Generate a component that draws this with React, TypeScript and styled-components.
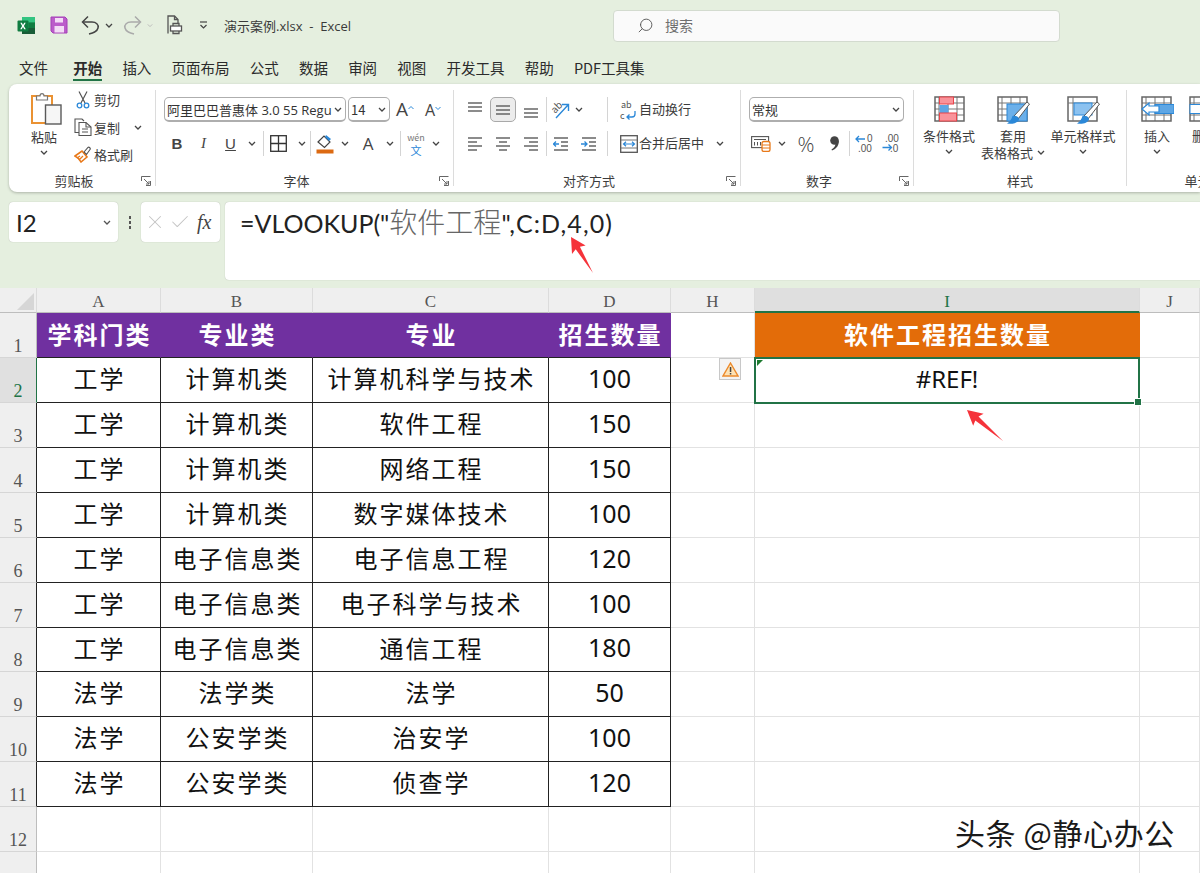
import React from 'react';
import styled, { createGlobalStyle } from 'styled-components';
import { Search, X, Check } from 'lucide-react';

const UI_FONT = '"Open Sans", "Noto Sans CJK SC", sans-serif';
const CELL_FONT = '"Noto Sans CJK SC", "Noto Sans", sans-serif';
const GREEN = '#217346';
const BLUE = '#2b88d8';

const GlobalStyle = createGlobalStyle`
  html, body { margin: 0; padding: 0; background: #e5efdf; }
  * { box-sizing: border-box; }
`;

const s = {
  Page: styled.div`
    position: relative;
    width: 1200px;
    height: 873px;
    overflow: hidden;
    background: #e5efdf;
    font-family: ${UI_FONT};
    color: #333;
    display: flex;
    flex-direction: column;
  `,
  TitleBar: styled.div`
    height: 50px;
    display: flex;
    align-items: center;
    flex: none;
  `,
  QuickAccess: styled.div`
    width: 613px;
    display: flex;
    align-items: center;
    padding-left: 14px;
    height: 100%;
  `,
  Slot: styled.div<{ $w: number; $ml?: number }>`
    width: ${(p) => p.$w}px;
    margin-left: ${(p) => p.$ml ?? 0}px;
    flex: none;
    display: flex;
    align-items: center;
    justify-content: center;
    height: 100%;
  `,
  DocTitle: styled.div`
    margin-left: 14px;
    font-size: 13px;
    color: #3a3a3a;
    white-space: pre;
  `,
  SearchBox: styled.div`
    width: 447px;
    height: 32px;
    margin-top: 2px;
    background: #fafafa;
    border: 1px solid #d3dbcf;
    border-radius: 4px;
    display: flex;
    align-items: center;
    gap: 11px;
    padding: 0 0 2px 23px;
    font-size: 14px;
    color: #6e6e6e;
  `,
  Tabs: styled.div`
    height: 34px;
    flex: none;
    display: flex;
    gap: 20.2px;
    padding-left: 19px;
  `,
  Tab: styled.div<{ $active?: boolean }>`
    height: 31px;
    margin-left: ${(p) => (p.$active ? 5 : 0)}px;
    line-height: 36px;
    font-size: 14.5px;
    font-family: ${CELL_FONT};
    font-weight: ${(p) => (p.$active ? 700 : 400)};
    color: #2b2b2b;
    white-space: nowrap;
    border-bottom: 2px solid ${(p) => (p.$active ? GREEN : 'transparent')};
  `,
  Ribbon: styled.div`
    height: 108px;
    flex: none;
    margin-left: 9px;
    background: #fff;
    border-radius: 8px 0 0 8px;
    box-shadow: 0 1px 3px rgba(0, 0, 0, 0.25);
    display: flex;
    overflow: hidden;
    font-family: ${CELL_FONT};
    font-size: 13px;
    color: #3c3c3c;
  `,
  Group: styled.section<{ $w: number }>`
    width: ${(p) => p.$w}px;
    flex: none;
    display: flex;
    flex-direction: column;
  `,
  GroupBody: styled.div<{ $pl?: number }>`
    height: 88px;
    display: flex;
    padding-left: ${(p) => p.$pl ?? 0}px;
  `,
  GroupFooter: styled.div`
    height: 17px;
    display: flex;
    align-items: center;
  `,
  GroupLabel: styled.div`
    flex: 1;
    text-align: center;
    font-size: 13px;
    line-height: 17px;
    white-space: nowrap;
  `,
  Launcher: styled.div`
    width: 16px;
    display: flex;
    justify-content: center;
    padding-right: 2px;
  `,
  GroupDivider: styled.div`
    width: 1px;
    height: 96px;
    margin-top: 6px;
    background: #dcdcdc;
    flex: none;
  `,
  PasteBtn: styled.div`
    width: 63px;
    flex: none;
    display: flex;
    flex-direction: column;
    align-items: center;
    padding: 8px 0 0 7px;
  `,
  PasteArt: styled.div`
    margin-left: 6px;
    height: 33px;
  `,
  BtnLabel: styled.div<{ $mt?: number }>`
    margin-top: ${(p) => p.$mt ?? 0}px;
    line-height: 17px;
    white-space: nowrap;
    display: flex;
    align-items: center;
    gap: 4px;
  `,
  CaretLine: styled.div`
    height: 15px;
    display: flex;
    align-items: center;
  `,
  SmallCol: styled.div`
    padding-top: 2px;
    display: flex;
    flex-direction: column;
  `,
  SmallRow: styled.div`
    height: 27.5px;
    display: flex;
    align-items: center;
    white-space: nowrap;
  `,
  Rows: styled.div`
    padding-top: 13px;
    display: flex;
    flex-direction: column;
    gap: 9px;
  `,
  Row: styled.div`
    height: 25px;
    display: flex;
    align-items: center;
    white-space: nowrap;
  `,
  RowText: styled.span`
    margin-bottom: 2px;
  `,
  Select: styled.div<{ $w: number; $ml?: number }>`
    width: ${(p) => p.$w}px;
    margin-left: ${(p) => p.$ml ?? 0}px;
    height: 25px;
    flex: none;
    border: 1px solid #aeaeae;
    border-bottom-width: 2px;
    border-radius: 5px;
    padding: 0 3px 0 2px;
    display: flex;
    align-items: center;
    gap: 5px;
    font-size: 13px;
    color: #333;
  `,
  SelectText: styled.span`
    white-space: nowrap;
    flex: 1;
    min-width: 0;
  `,
  SelectLatin: styled.span`
    font-family: 'Open Sans', sans-serif;
    font-size: 13px;
  `,
  GrowA: styled.span<{ $size: number }>`
    font-family: 'Open Sans', sans-serif;
    font-size: ${(p) => p.$size}px;
    color: #444;
    line-height: 1;
  `,
  FontBtn: styled.span<{ $bold?: boolean; $italic?: boolean; $under?: boolean }>`
    font-family: ${(p) => (p.$italic ? "'Liberation Serif', serif" : "'Liberation Sans', sans-serif")};
    font-size: 15px;
    font-weight: ${(p) => (p.$bold ? 700 : 400)};
    font-style: ${(p) => (p.$italic ? 'italic' : 'normal')};
    text-decoration: ${(p) => (p.$under ? 'underline' : 'none')};
    color: #444;
  `,
  VSep: styled.div<{ $ml?: number }>`
    width: 1px;
    height: 25px;
    flex: none;
    margin-left: ${(p) => p.$ml ?? 0}px;
    background: #d4d4d4;
  `,
  Wen: styled.div`
    display: flex;
    flex-direction: column;
    align-items: center;
    gap: 1px;
  `,
  WenTop: styled.span`
    font-size: 9px;
    line-height: 11px;
    color: #777;
  `,
  WenBottom: styled.span`
    font-size: 11px;
    line-height: 12px;
    color: ${BLUE};
  `,
  Pressed: styled.div`
    width: 26px;
    height: 25px;
    background: #ececec;
    border: 1px solid #a9a9a9;
    border-radius: 5px;
    display: flex;
    align-items: center;
    justify-content: center;
  `,
  Percent: styled.span`
    font-family: 'Open Sans', sans-serif;
    font-weight: 300;
    font-size: 21px;
    color: #444;
  `,
  BigBtn: styled.div<{ $w: number }>`
    width: ${(p) => p.$w}px;
    flex: none;
    display: flex;
    flex-direction: column;
    align-items: center;
    padding-top: 12px;
  `,
  BigArt: styled.div`
    height: 28px;
  `,
  FormulaRow: styled.div`
    height: 78px;
    margin-top: 10px;
    padding-left: 9px;
    flex: none;
    display: flex;
    align-items: flex-start;
  `,
  NameBox: styled.div`
    width: 109px;
    height: 40px;
    background: #fff;
    border-radius: 4px;
    box-shadow: 0 0 1px rgba(0, 0, 0, 0.3);
    display: flex;
    align-items: center;
    justify-content: space-between;
    padding: 0 7px;
    font-family: 'Lato', sans-serif;
    font-size: 24px;
    color: #222;
  `,
  Dots: styled.div`
    width: 23px;
    height: 40px;
    flex: none;
    display: flex;
    flex-direction: column;
    align-items: center;
    justify-content: center;
    gap: 2px;
  `,
  Dot: styled.i`
    width: 2px;
    height: 3px;
    background: #555;
  `,
  FxBox: styled.div`
    width: 79px;
    height: 40px;
    flex: none;
    background: #fff;
    border-radius: 4px;
    box-shadow: 0 0 1px rgba(0, 0, 0, 0.3);
    display: flex;
    align-items: center;
    gap: 3px;
    padding-left: 3px;
  `,
  Fx: styled.span`
    margin-left: 3px;
    font-family: 'Liberation Serif', serif;
    font-style: italic;
    font-size: 20px;
    color: #444;
  `,
  FormulaInput: styled.div`
    flex: 1;
    height: 78px;
    margin-left: 5px;
    background: #fff;
    border-radius: 4px 0 0 4px;
    box-shadow: 0 0 1px rgba(0, 0, 0, 0.3);
    padding-left: 15px;
    font-family: 'Lato', sans-serif;
    font-size: 25px;
    line-height: 38px;
    color: #222;
    white-space: nowrap;
  `,
  FormulaCjk: styled.span`
    font-family: 'Noto Sans CJK SC', sans-serif;
    font-size: 28px;
    font-weight: 300;
    color: #666;
  `,
  FormulaTail: styled.span`
    letter-spacing: 1.1px;
  `,
  Sheet: styled.div`
    margin-top: 8px;
    flex: 1;
    min-height: 0;
    background: #fff;
    display: grid;
    grid-template-columns: 37px 124px 152px 236px 122px 84px 385px 1fr;
    grid-template-rows: 25px 45px 45px 45px 45px 45px 45px 45px 44px 45px 45px 45px 45px 45px;
    overflow: hidden;
  `,
  Corner: styled.div`
    position: relative;
    background: #efefef;
    border-right: 1px solid #dcdcdc;
    border-bottom: 1px solid #bdbdbd;
    &::after {
      content: '';
      position: absolute;
      right: 2px;
      bottom: 2px;
      border-style: solid;
      border-width: 0 0 17px 17px;
      border-color: transparent transparent #d6d6d6 transparent;
    }
  `,
  ColHead: styled.div<{ $active?: boolean }>`
    background: ${(p) => (p.$active ? '#dfdfdf' : '#efefef')};
    border-right: 1px solid #dcdcdc;
    border-bottom: ${(p) => (p.$active ? `2px solid ${GREEN}` : '1px solid #bdbdbd')};
    color: ${(p) => (p.$active ? GREEN : '#555')};
    font-family: 'Liberation Serif', serif;
    font-size: 17px;
    text-align: center;
    line-height: 28px;
  `,
  RowHead: styled.div<{ $active?: boolean; $table?: boolean }>`
    background: ${(p) => (p.$active ? '#e0e0e0' : '#efefef')};
    border-bottom: 1px solid #d6d6d6;
    border-right: 1px solid ${(p) => (p.$active ? GREEN : p.$table ? '#222' : '#bdbdbd')};
    color: ${(p) => (p.$active ? GREEN : '#555')};
    font-family: 'Liberation Serif', serif;
    font-size: 18px;
    display: flex;
    align-items: flex-end;
    justify-content: center;
  `,
  Cell: styled.div<{ $bg?: string; $line?: string; $bottom?: string; $white?: boolean; $num?: boolean }>`
    position: relative;
    background: ${(p) => p.$bg ?? '#fff'};
    border-right: 1px solid ${(p) => p.$line ?? '#e2e2e2'};
    border-bottom: 1px solid ${(p) => p.$bottom ?? p.$line ?? '#e2e2e2'};
    color: ${(p) => (p.$white ? '#fff' : '#111')};
    font-family: ${(p) => (p.$num ? "'Noto Sans', sans-serif" : CELL_FONT)};
    font-size: ${(p) => (p.$num ? 25 : 24)}px;
    font-weight: ${(p) => (p.$white ? 700 : 400)};
    letter-spacing: ${(p) => (p.$num ? 0 : 2)}px;
    padding-bottom: ${(p) => (p.$white ? 3 : 5)}px;
    padding-left: ${(p) => (p.$num ? 0 : 2)}px;
    white-space: nowrap;
    display: flex;
    align-items: center;
    justify-content: center;
  `,
  ActiveCell: styled.div`
    position: relative;
    z-index: 2;
    margin: -1px 0 -1px -1px;
    padding-bottom: 4px;
    background: #fff;
    border: 2px solid ${GREEN};
    color: #111;
    font-family: 'Noto Sans', sans-serif;
    font-size: 24px;
    display: flex;
    align-items: center;
    justify-content: center;
    &::before {
      content: '';
      position: absolute;
      left: 1px;
      top: 1px;
      border-style: solid;
      border-width: 6px 6px 0 0;
      border-color: #1c7a2f transparent transparent transparent;
    }
    &::after {
      content: '';
      position: absolute;
      right: -4px;
      bottom: -4px;
      width: 6px;
      height: 6px;
      background: ${GREEN};
      border: 1px solid #fff;
    }
  `,
  WarnBadge: styled.div`
    position: absolute;
    right: 13px;
    top: 0;
    width: 22px;
    height: 22px;
    background: #f4f4f4;
    border: 1px solid #c8c8c8;
    display: flex;
    align-items: center;
    justify-content: center;
  `,
  Arrow: styled.svg<{ $left: number; $top: number }>`
    position: absolute;
    left: ${(p) => p.$left}px;
    top: ${(p) => p.$top}px;
    z-index: 5;
  `,
  Watermark: styled.div`
    position: absolute;
    left: 955px;
    top: 812px;
    z-index: 5;
    font-family: ${CELL_FONT};
    font-size: 30px;
    letter-spacing: 0.6px;
    line-height: 40px;
    color: #1a1a1a;
    text-shadow: 1px 1px 1px #fff;
    white-space: nowrap;
  `,
};

const Caret = ({ color = '#444' }: { color?: string }) => (
  <svg width="8" height="5" viewBox="0 0 8 5">
    <polyline points="1,1 4,4 7,1" fill="none" stroke={color} strokeWidth="1.3" />
  </svg>
);

const LauncherIcon = () => (
  <svg width="10" height="10" viewBox="0 0 10 10" fill="none" stroke="#666" strokeWidth="1">
    <path d="M0.5 5V0.5H9.5" />
    <path d="M9.5 5V9.5H5" />
    <path d="M3 3L8 8M8 5V8H5" />
  </svg>
);

const ExcelLogo = () => (
  <svg width="19" height="19" viewBox="0 0 19 19">
    <rect x="5" y="1" width="13" height="17" rx="1.5" fill="#21a366" />
    <rect x="5" y="1" width="13" height="5.5" fill="#33c481" />
    <rect x="11.5" y="6.5" width="6.5" height="5.5" fill="#107c41" />
    <rect x="5" y="12" width="13" height="6" fill="#185c37" />
    <rect x="0.5" y="4.5" width="11" height="11" rx="1" fill="#107c41" />
    <path d="M3.3 6.8H4.9L6 8.9L7.2 6.8H8.7L6.9 10L8.8 13.2H7.2L6 11L4.8 13.2H3.2L5.1 10Z" fill="#fff" />
  </svg>
);

const SaveIcon = () => (
  <svg width="18" height="18" viewBox="0 0 18 18">
    <path d="M1 1H15L17 3V17H3L1 15Z" fill="#bb5cca" stroke="#a53fb8" />
    <rect x="5" y="2" width="8" height="4.5" fill="#f3dcf6" />
    <rect x="4.5" y="10" width="9.5" height="6.5" fill="#f3dcf6" />
  </svg>
);

const UndoIcon = ({ color, flip }: { color: string; flip?: boolean }) => (
  <svg width="19" height="20" viewBox="0 0 19 20" fill="none" stroke={color} strokeWidth="1.5" transform={flip ? 'scale(-1 1)' : undefined}>
    <path d="M2 7H11C15 7 18 9.5 17 13C16 17 12 18 8 19" />
    <path d="M7 1.5L1.5 7L7 12.5" />
  </svg>
);

const PreviewIcon = () => (
  <svg width="17" height="20" viewBox="0 0 17 20" fill="none" stroke="#555" strokeWidth="1.3">
    <path d="M2 18.5V1H8.5L12 4.5V8" />
    <path d="M8.5 1V4.5H12" />
    <rect x="4.5" y="11" width="11" height="5" fill="#fff" />
    <path d="M7 11V8.5H13V11M7 16V18.5H13V16" />
  </svg>
);

const CustomizeIcon = () => (
  <svg width="9" height="8" viewBox="0 0 9 8" fill="none" stroke="#444" strokeWidth="1.2">
    <path d="M1 1H8" />
    <path d="M1.5 4L4.5 7L7.5 4" />
  </svg>
);

const PasteIcon = () => (
  <svg width="32" height="33" viewBox="0 0 32 33">
    <rect x="1" y="4" width="20" height="27" fill="#fff" stroke="#ea9233" strokeWidth="2" />
    <path d="M5.5 8V4H9C9 0.7 13 0.7 13 4H16.5V8Z" fill="#fff" stroke="#777" strokeWidth="1.2" />
    <rect x="14.5" y="13" width="15.5" height="19" fill="#f6f6f6" stroke="#5a5a5a" strokeWidth="1.4" />
  </svg>
);

const ScissorsIcon = () => (
  <svg width="14" height="18" viewBox="0 0 14 18" fill="none">
    <path d="M3 0.5L9 12M11 0.5L5 12" stroke="#555" strokeWidth="1.2" />
    <circle cx="3.5" cy="14.5" r="2.3" stroke={BLUE} strokeWidth="1.3" />
    <circle cx="10.5" cy="14.5" r="2.3" stroke={BLUE} strokeWidth="1.3" />
  </svg>
);

const CopyIcon = () => (
  <svg width="18" height="18" viewBox="0 0 18 18" fill="none" stroke="#555" strokeWidth="1.1">
    <path d="M5 14.5H1V1H8L10 3" />
    <path d="M5 4.5H12L17 9V17.5H5Z" fill="#fff" />
    <path d="M12 4.5V9H17M8 11H14M8 14H14" />
  </svg>
);

const PainterIcon = () => (
  <svg width="18" height="17" viewBox="0 0 18 17">
    <path d="M1 10L8 5L13 11L7 16C6 14 3 11 1 10Z" fill="#fff" stroke="#e8791a" strokeWidth="1.6" />
    <path d="M3 12L6 10M5 14L9 10" stroke="#e8791a" strokeWidth="1.2" />
    <path d="M10 6L14 1.5C15 0.5 17 2.5 16 3.5L12.5 8.5Z" fill="#fff" stroke="#555" strokeWidth="1.1" />
  </svg>
);

const BordersIcon = () => (
  <svg width="17" height="17" viewBox="0 0 17 17" fill="none" stroke="#333" strokeWidth="1.3">
    <rect x="0.7" y="0.7" width="15.6" height="15.6" />
    <path d="M8.5 1V16M1 8.5H16" />
  </svg>
);

const FillIcon = () => (
  <svg width="18" height="20" viewBox="0 0 18 20">
    <path d="M2 8L8 2L14 8L8.5 13.5Z" fill="#fff" stroke="#444" strokeWidth="1.2" />
    <path d="M10 1L15 5L13 7L9 3Z" fill={BLUE} />
    <rect x="0.5" y="15.5" width="17" height="4" fill="#dc6a12" />
  </svg>
);

// 가로줄 아이콘: [x1, x2, y]
const Lines = ({ lines, h = 16 }: { lines: number[][]; h?: number }) => (
  <svg width="16" height={h} viewBox={`0 0 16 ${h}`} stroke="#666" strokeWidth="1.4">
    {lines.map(([a, b, y], i) => (
      <line key={i} x1={a} x2={b} y1={y} y2={y} />
    ))}
  </svg>
);

const OrientIcon = () => (
  <svg width="20" height="20" viewBox="0 0 20 20" fill="none" overflow="visible">
    <text x="1" y="11" fontSize="10" fill="#555" transform="rotate(-45 6 9)">ab</text>
    <path d="M5 18L17 5M11 4.5H17.5V11" stroke={BLUE} strokeWidth="1.4" />
  </svg>
);

const IndentIcon = ({ flip }: { flip?: boolean }) => (
  <svg width="16" height="16" viewBox="0 0 16 16" fill="none">
    <path d="M1 2H15M8 6H15M8 10H15M1 14H15" stroke="#666" strokeWidth="1.3" />
    <path d={flip ? 'M0 8H6M3.5 5.5L6 8L3.5 10.5' : 'M6 8H0.5M3 5.5L0.5 8L3 10.5'} stroke={BLUE} strokeWidth="1.3" />
  </svg>
);

const WrapIcon = () => (
  <svg width="18" height="24" viewBox="0 0 18 24" fill="none" overflow="visible">
    <text x="1" y="10" fontSize="9" fill="#555">ab</text>
    <text x="0" y="21" fontSize="9" fill="#555">c</text>
    <path d="M15 13V16C15 18 14 19 12 19H7M9.5 16.5L7 19L9.5 21.5" stroke={BLUE} strokeWidth="1.3" />
  </svg>
);

const MergeIcon = () => (
  <svg width="18" height="18" viewBox="0 0 18 18" fill="none">
    <rect x="0.7" y="0.7" width="16.6" height="16.6" stroke="#555" strokeWidth="1.3" />
    <path d="M1 5H17M1 13H17" stroke="#777" />
    <path d="M3.5 9H14.5M6 6.7L3.5 9L6 11.3M12 6.7L14.5 9L12 11.3" stroke={BLUE} strokeWidth="1.2" />
  </svg>
);

const AccountingIcon = () => (
  <svg width="20" height="17" viewBox="0 0 20 17" fill="none">
    <rect x="0.6" y="1.6" width="17" height="11" stroke="#555" strokeWidth="1.1" />
    <path d="M3 4.5H15M3.5 7V10.5M6.5 7V10.5M9.5 7V10.5" stroke="#555" />
    <rect x="11" y="6.5" width="8" height="10" rx="2" fill="#fff" stroke="#e8791a" strokeWidth="1.3" />
    <path d="M11 10H19M11 13H19" stroke="#e8791a" />
  </svg>
);

const CommaIcon = () => (
  <svg width="11" height="15" viewBox="0 0 11 15">
    <circle cx="5.5" cy="4.5" r="4.3" fill="#444" />
    <path d="M9.8 4.5C10.2 9 7.5 13 3 14.5L2.5 13.5C5 12 6.5 10 6.5 7.5Z" fill="#444" />
  </svg>
);

const DecimalIcon = ({ more }: { more?: boolean }) => (
  <svg width="18" height="19" viewBox="0 0 18 19" fill="none" overflow="visible">
    <text x={more ? 12 : 3} y="8" fontSize="10" fontFamily="Liberation Sans" fill="#555">{more ? '0' : '.00'}</text>
    <text x={more ? 3 : 8} y="18" fontSize="10" fontFamily="Liberation Sans" fill="#555">{more ? '.00' : '.0'}</text>
    <path d={more ? 'M10 5H1M4 2L1 5L4 8' : 'M0.5 13.5H9.5M6.5 10.5L9.5 13.5L6.5 16.5'} stroke={BLUE} strokeWidth="1.3" />
  </svg>
);

const GridBase = () => (
  <>
    <path d="M5 1V25M14 1V25M23 1V25M1 7H30M1 13H30M1 19H30" stroke="#777" strokeWidth="1" />
    <rect x="1" y="1" width="29" height="24" fill="none" stroke="#666" strokeWidth="1.5" />
  </>
);

const BrushOver = () => (
  <>
    <path d="M17 20L30 6L32.5 8L21 23Z" fill="#fff" stroke="#555" strokeWidth="1" />
    <path d="M15.5 20C19 19 22 21 22 23.5C21 27 15 28.5 10 27.5C13 26 14.5 23 15.5 20Z" fill={BLUE} />
  </>
);

const CondFormatIcon = () => (
  <svg width="31" height="26" viewBox="0 0 31 26">
    <GridBase />
    <rect x="5.5" y="1" width="14" height="7" fill="#f9939a" stroke="#e8454b" />
    <rect x="5.5" y="9" width="9" height="8" fill="#5ea6e4" />
    <rect x="5.5" y="17" width="17" height="8" fill="#f9939a" stroke="#e8454b" />
  </svg>
);

const TableFormatIcon = () => (
  <svg width="33" height="28" viewBox="0 0 33 28">
    <GridBase />
    <rect x="10" y="8" width="20" height="17" fill="#6cb0ea" stroke={BLUE} />
    <BrushOver />
  </svg>
);

const CellStyleIcon = () => (
  <svg width="33" height="28" viewBox="0 0 33 28">
    <rect x="1" y="1" width="29" height="24" fill="#fff" stroke="#666" strokeWidth="1.5" />
    <path d="M6 1V25M1 7H30" stroke="#777" />
    <rect x="7" y="7" width="18" height="12" fill="#8cc2f0" stroke={BLUE} />
    <BrushOver />
  </svg>
);

const InsertIcon = () => (
  <svg width="33" height="26" viewBox="0 0 33 26">
    <GridBase />
    <rect x="14" y="8.5" width="19" height="9" fill="#5ea6e4" stroke={BLUE} />
    <path d="M1 13L8 7V10H18V16H8V19Z" fill="#fff" stroke={BLUE} strokeWidth="1.2" />
  </svg>
);

const DeleteIcon = () => (
  <svg width="33" height="26" viewBox="0 0 33 26">
    <GridBase />
    <rect x="1" y="8.5" width="20" height="9" fill="#fff" stroke={BLUE} />
  </svg>
);

const WarnIcon = () => (
  <svg width="17" height="15" viewBox="0 0 17 15">
    <path d="M8.5 1L16 14H1Z" fill="#fde2b5" stroke="#ec8a2c" strokeWidth="1.4" />
    <rect x="7.8" y="5" width="1.5" height="5" fill="#444" />
    <rect x="7.8" y="11" width="1.5" height="1.5" fill="#444" />
  </svg>
);

const tabs = ['文件', '开始', '插入', '页面布局', '公式', '数据', '审阅', '视图', '开发工具', '帮助', 'PDF工具集'];

const colHeads = ['A', 'B', 'C', 'D', 'H', 'I', 'J'];

const tableRows = [
  ['工学', '计算机类', '计算机科学与技术', '100'],
  ['工学', '计算机类', '软件工程', '150'],
  ['工学', '计算机类', '网络工程', '150'],
  ['工学', '计算机类', '数字媒体技术', '100'],
  ['工学', '电子信息类', '电子信息工程', '120'],
  ['工学', '电子信息类', '电子科学与技术', '100'],
  ['工学', '电子信息类', '通信工程', '180'],
  ['法学', '法学类', '法学', '50'],
  ['法学', '公安学类', '治安学', '100'],
  ['法学', '公安学类', '侦查学', '120'],
];

const TitleArea = () => (
  <s.TitleBar>
    <s.QuickAccess>
      <s.Slot $w={24}><ExcelLogo /></s.Slot>
      <s.Slot $w={42}><SaveIcon /></s.Slot>
      <s.Slot $w={20}><UndoIcon color="#444" /></s.Slot>
      <s.Slot $w={18}><Caret /></s.Slot>
      <s.Slot $w={29}><UndoIcon color="#aaa" flip /></s.Slot>
      <s.Slot $w={6}><Caret color="#bbb" /></s.Slot>
      <s.Slot $w={43}><PreviewIcon /></s.Slot>
      <s.Slot $w={14}><CustomizeIcon /></s.Slot>
      <s.DocTitle>演示案例.xlsx  -  Excel</s.DocTitle>
    </s.QuickAccess>
    <s.SearchBox>
      <Search size={17} color="#555" strokeWidth={1.3} style={{ transform: 'scaleX(-1)' }} />
      搜索
    </s.SearchBox>
  </s.TitleBar>
);

const RibbonArea = () => (
  <s.Ribbon>
    <s.Group $w={146}>
      <s.GroupBody>
        <s.PasteBtn>
          <s.PasteArt><PasteIcon /></s.PasteArt>
          <s.BtnLabel $mt={3}>粘贴</s.BtnLabel>
          <s.CaretLine><Caret /></s.CaretLine>
        </s.PasteBtn>
        <s.SmallCol>
          <s.SmallRow>
            <s.Slot $w={22}><ScissorsIcon /></s.Slot>
            剪切
          </s.SmallRow>
          <s.SmallRow>
            <s.Slot $w={22}><CopyIcon /></s.Slot>
            复制
            <s.Slot $w={12} $ml={12}><Caret /></s.Slot>
          </s.SmallRow>
          <s.SmallRow>
            <s.Slot $w={22}><PainterIcon /></s.Slot>
            格式刷
          </s.SmallRow>
        </s.SmallCol>
      </s.GroupBody>
      <s.GroupFooter>
        <s.GroupLabel>剪贴板</s.GroupLabel>
        <s.Launcher><LauncherIcon /></s.Launcher>
      </s.GroupFooter>
    </s.Group>
    <s.GroupDivider />

    <s.Group $w={297}>
      <s.GroupBody $pl={8}>
        <s.Rows>
          <s.Row>
            <s.Select $w={182}>
              <s.SelectText>阿里巴巴普惠体<s.SelectLatin> 3.0 55 Regu</s.SelectLatin></s.SelectText>
              <Caret />
            </s.Select>
            <s.Select $w={42} $ml={2}>
              <s.SelectText>14</s.SelectText>
              <Caret />
            </s.Select>
            <s.Slot $w={24} $ml={3}>
              <s.GrowA $size={19}>A</s.GrowA>
              <svg width="6" height="10" viewBox="0 0 6 10"><polyline points="0.5,4 3,1.5 5.5,4" fill="none" stroke={BLUE} /></svg>
            </s.Slot>
            <s.Slot $w={24} $ml={4}>
              <s.GrowA $size={16}>A</s.GrowA>
              <svg width="6" height="10" viewBox="0 0 6 10"><polyline points="0.5,2 3,4.5 5.5,2" fill="none" stroke={BLUE} /></svg>
            </s.Slot>
          </s.Row>
          <s.Row>
            <s.Slot $w={26}><s.FontBtn $bold>B</s.FontBtn></s.Slot>
            <s.Slot $w={27}><s.FontBtn $italic>I</s.FontBtn></s.Slot>
            <s.Slot $w={27}><s.FontBtn $under>U</s.FontBtn></s.Slot>
            <s.Slot $w={16}><Caret /></s.Slot>
            <s.VSep $ml={3} />
            <s.Slot $w={29}><BordersIcon /></s.Slot>
            <s.Slot $w={17}><Caret /></s.Slot>
            <s.VSep />
            <s.Slot $w={28}><FillIcon /></s.Slot>
            <s.Slot $w={12}><Caret /></s.Slot>
            <s.Slot $w={34}><s.GrowA $size={17}>A</s.GrowA></s.Slot>
            <s.Slot $w={9}><Caret /></s.Slot>
            <s.VSep $ml={6} />
            <s.Slot $w={30}>
              <s.Wen>
                <s.WenTop>wén</s.WenTop>
                <s.WenBottom>文</s.WenBottom>
              </s.Wen>
            </s.Slot>
            <s.Slot $w={10}><Caret /></s.Slot>
          </s.Row>
        </s.Rows>
      </s.GroupBody>
      <s.GroupFooter>
        <s.GroupLabel>字体</s.GroupLabel>
        <s.Launcher><LauncherIcon /></s.Launcher>
      </s.GroupFooter>
    </s.Group>
    <s.GroupDivider />

    <s.Group $w={286}>
      <s.GroupBody $pl={7}>
        <s.Rows>
          <s.Row>
            <s.Slot $w={28}><Lines lines={[[1, 15, 1], [1, 15, 5], [1, 15, 9]]} /></s.Slot>
            <s.Slot $w={28}><s.Pressed><Lines lines={[[1, 15, 4], [1, 15, 8], [1, 15, 12]]} /></s.Pressed></s.Slot>
            <s.Slot $w={28}><Lines lines={[[1, 15, 7], [1, 15, 11], [1, 15, 15]]} /></s.Slot>
            <s.VSep $ml={1} />
            <s.Slot $w={28}><OrientIcon /></s.Slot>
            <s.Slot $w={8}><Caret /></s.Slot>
            <s.VSep $ml={24} />
            <s.Slot $w={21} $ml={10}><WrapIcon /></s.Slot>
            <s.RowText>自动换行</s.RowText>
          </s.Row>
          <s.Row>
            <s.Slot $w={28}><Lines lines={[[1, 15, 2], [1, 10, 6], [1, 15, 10], [1, 10, 14]]} /></s.Slot>
            <s.Slot $w={28}><Lines lines={[[1, 15, 2], [4, 12, 6], [1, 15, 10], [4, 12, 14]]} /></s.Slot>
            <s.Slot $w={28}><Lines lines={[[1, 15, 2], [6, 15, 6], [1, 15, 10], [6, 15, 14]]} /></s.Slot>
            <s.VSep $ml={1} />
            <s.Slot $w={28}><IndentIcon /></s.Slot>
            <s.Slot $w={28}><IndentIcon flip /></s.Slot>
            <s.VSep $ml={4} />
            <s.Slot $w={21} $ml={10}><MergeIcon /></s.Slot>
            <s.RowText>合并后居中</s.RowText>
            <s.Slot $w={12} $ml={10}><Caret /></s.Slot>
          </s.Row>
        </s.Rows>
      </s.GroupBody>
      <s.GroupFooter>
        <s.GroupLabel>对齐方式</s.GroupLabel>
        <s.Launcher><LauncherIcon /></s.Launcher>
      </s.GroupFooter>
    </s.Group>
    <s.GroupDivider />

    <s.Group $w={172}>
      <s.GroupBody $pl={8}>
        <s.Rows>
          <s.Row>
            <s.Select $w={155}>
              <s.SelectText>常规</s.SelectText>
              <Caret />
            </s.Select>
          </s.Row>
          <s.Row>
            <s.Slot $w={24}><AccountingIcon /></s.Slot>
            <s.Slot $w={18}><Caret /></s.Slot>
            <s.Slot $w={30}><s.Percent>%</s.Percent></s.Slot>
            <s.Slot $w={26}><CommaIcon /></s.Slot>
            <s.VSep $ml={2} />
            <s.Slot $w={27}><DecimalIcon more /></s.Slot>
            <s.Slot $w={28}><DecimalIcon /></s.Slot>
          </s.Row>
        </s.Rows>
      </s.GroupBody>
      <s.GroupFooter>
        <s.GroupLabel>数字</s.GroupLabel>
        <s.Launcher><LauncherIcon /></s.Launcher>
      </s.GroupFooter>
    </s.Group>
    <s.GroupDivider />

    <s.Group $w={212}>
      <s.GroupBody>
        <s.BigBtn $w={70}>
          <s.BigArt><CondFormatIcon /></s.BigArt>
          <s.BtnLabel $mt={3}>条件格式</s.BtnLabel>
          <s.CaretLine><Caret /></s.CaretLine>
        </s.BigBtn>
        <s.BigBtn $w={58}>
          <s.BigArt><TableFormatIcon /></s.BigArt>
          <s.BtnLabel $mt={3}>套用</s.BtnLabel>
          <s.BtnLabel>表格格式 <Caret /></s.BtnLabel>
        </s.BigBtn>
        <s.BigBtn $w={82}>
          <s.BigArt><CellStyleIcon /></s.BigArt>
          <s.BtnLabel $mt={3}>单元格样式</s.BtnLabel>
          <s.CaretLine><Caret /></s.CaretLine>
        </s.BigBtn>
      </s.GroupBody>
      <s.GroupFooter>
        <s.GroupLabel>样式</s.GroupLabel>
      </s.GroupFooter>
    </s.Group>
    <s.GroupDivider />

    <s.Group $w={170}>
      <s.GroupBody>
        <s.BigBtn $w={60}>
          <s.BigArt><InsertIcon /></s.BigArt>
          <s.BtnLabel $mt={3}>插入</s.BtnLabel>
          <s.CaretLine><Caret /></s.CaretLine>
        </s.BigBtn>
        <s.BigBtn $w={36}>
          <s.BigArt><DeleteIcon /></s.BigArt>
          <s.BtnLabel $mt={3}>删除</s.BtnLabel>
          <s.CaretLine><Caret /></s.CaretLine>
        </s.BigBtn>
      </s.GroupBody>
      <s.GroupFooter>
        <s.GroupLabel>单元格</s.GroupLabel>
        <s.Launcher />
      </s.GroupFooter>
    </s.Group>
  </s.Ribbon>
);

const FormulaArea = () => (
  <s.FormulaRow>
    <s.NameBox>
      I2
      <Caret color="#555" />
    </s.NameBox>
    <s.Dots>
      <s.Dot />
      <s.Dot />
      <s.Dot />
    </s.Dots>
    <s.FxBox>
      <X size={22} color="#c4c4c4" strokeWidth={1.1} />
      <Check size={22} color="#c4c4c4" strokeWidth={1.1} />
      <s.Fx>fx</s.Fx>
    </s.FxBox>
    <s.FormulaInput>
      =VLOOKUP("<s.FormulaCjk>软件工程</s.FormulaCjk>
      <s.FormulaTail>",C:D,4,0)</s.FormulaTail>
    </s.FormulaInput>
  </s.FormulaRow>
);

const SheetArea = () => (
  <s.Sheet>
    <s.Corner />
    {colHeads.map((c) => (
      <s.ColHead key={c} $active={c === 'I'}>{c}</s.ColHead>
    ))}

    <s.RowHead>1</s.RowHead>
    {['学科门类', '专业类', '专业', '招生数量'].map((t) => (
      <s.Cell key={t} $bg="#7030a0" $line="#7030a0" $bottom="#222" $white>{t}</s.Cell>
    ))}
    <s.Cell />
    <s.Cell $bg="#e36c09" $line="#e36c09" $white>软件工程招生数量</s.Cell>
    <s.Cell />

    {tableRows.map((row, i) => (
      <React.Fragment key={i}>
        <s.RowHead $active={i === 0} $table>{i + 2}</s.RowHead>
        {row.map((text, j) => (
          <s.Cell key={j} $line="#222" $num={j === 3}>{text}</s.Cell>
        ))}
        <s.Cell>{i === 0 && <s.WarnBadge><WarnIcon /></s.WarnBadge>}</s.Cell>
        {i === 0 ? <s.ActiveCell>#REF!</s.ActiveCell> : <s.Cell />}
        <s.Cell />
      </React.Fragment>
    ))}

    {/* 13행 번호는 화면 아래로 잘려서 보이지 않음 */}
    {['12', ''].map((n) => (
      <React.Fragment key={n}>
        <s.RowHead>{n}</s.RowHead>
        {colHeads.map((c) => (
          <s.Cell key={c} />
        ))}
      </React.Fragment>
    ))}
  </s.Sheet>
);

export default function App() {
  return (
    <s.Page>
      <GlobalStyle />
      <TitleArea />
      <s.Tabs>
        {tabs.map((t) => (
          <s.Tab key={t} $active={t === '开始'}>{t}</s.Tab>
        ))}
      </s.Tabs>
      <RibbonArea />
      <FormulaArea />
      <SheetArea />

      <s.Arrow $left={565} $top={232} width="35" height="45" viewBox="0 0 35 45">
        <polygon points="6,5 20.6,13.6 14.9,14.7 28,41 10.7,17.3 7,22" fill="#f5333a" />
      </s.Arrow>
      <s.Arrow $left={960} $top={404} width="48" height="42" viewBox="0 0 48 42">
        <polygon points="7,6 23.6,9.7 18.5,12.5 43,37 15.3,16.4 13.2,21.8" fill="#f5333a" />
      </s.Arrow>
      <s.Watermark>头条 @静心办公</s.Watermark>
    </s.Page>
  );
}
